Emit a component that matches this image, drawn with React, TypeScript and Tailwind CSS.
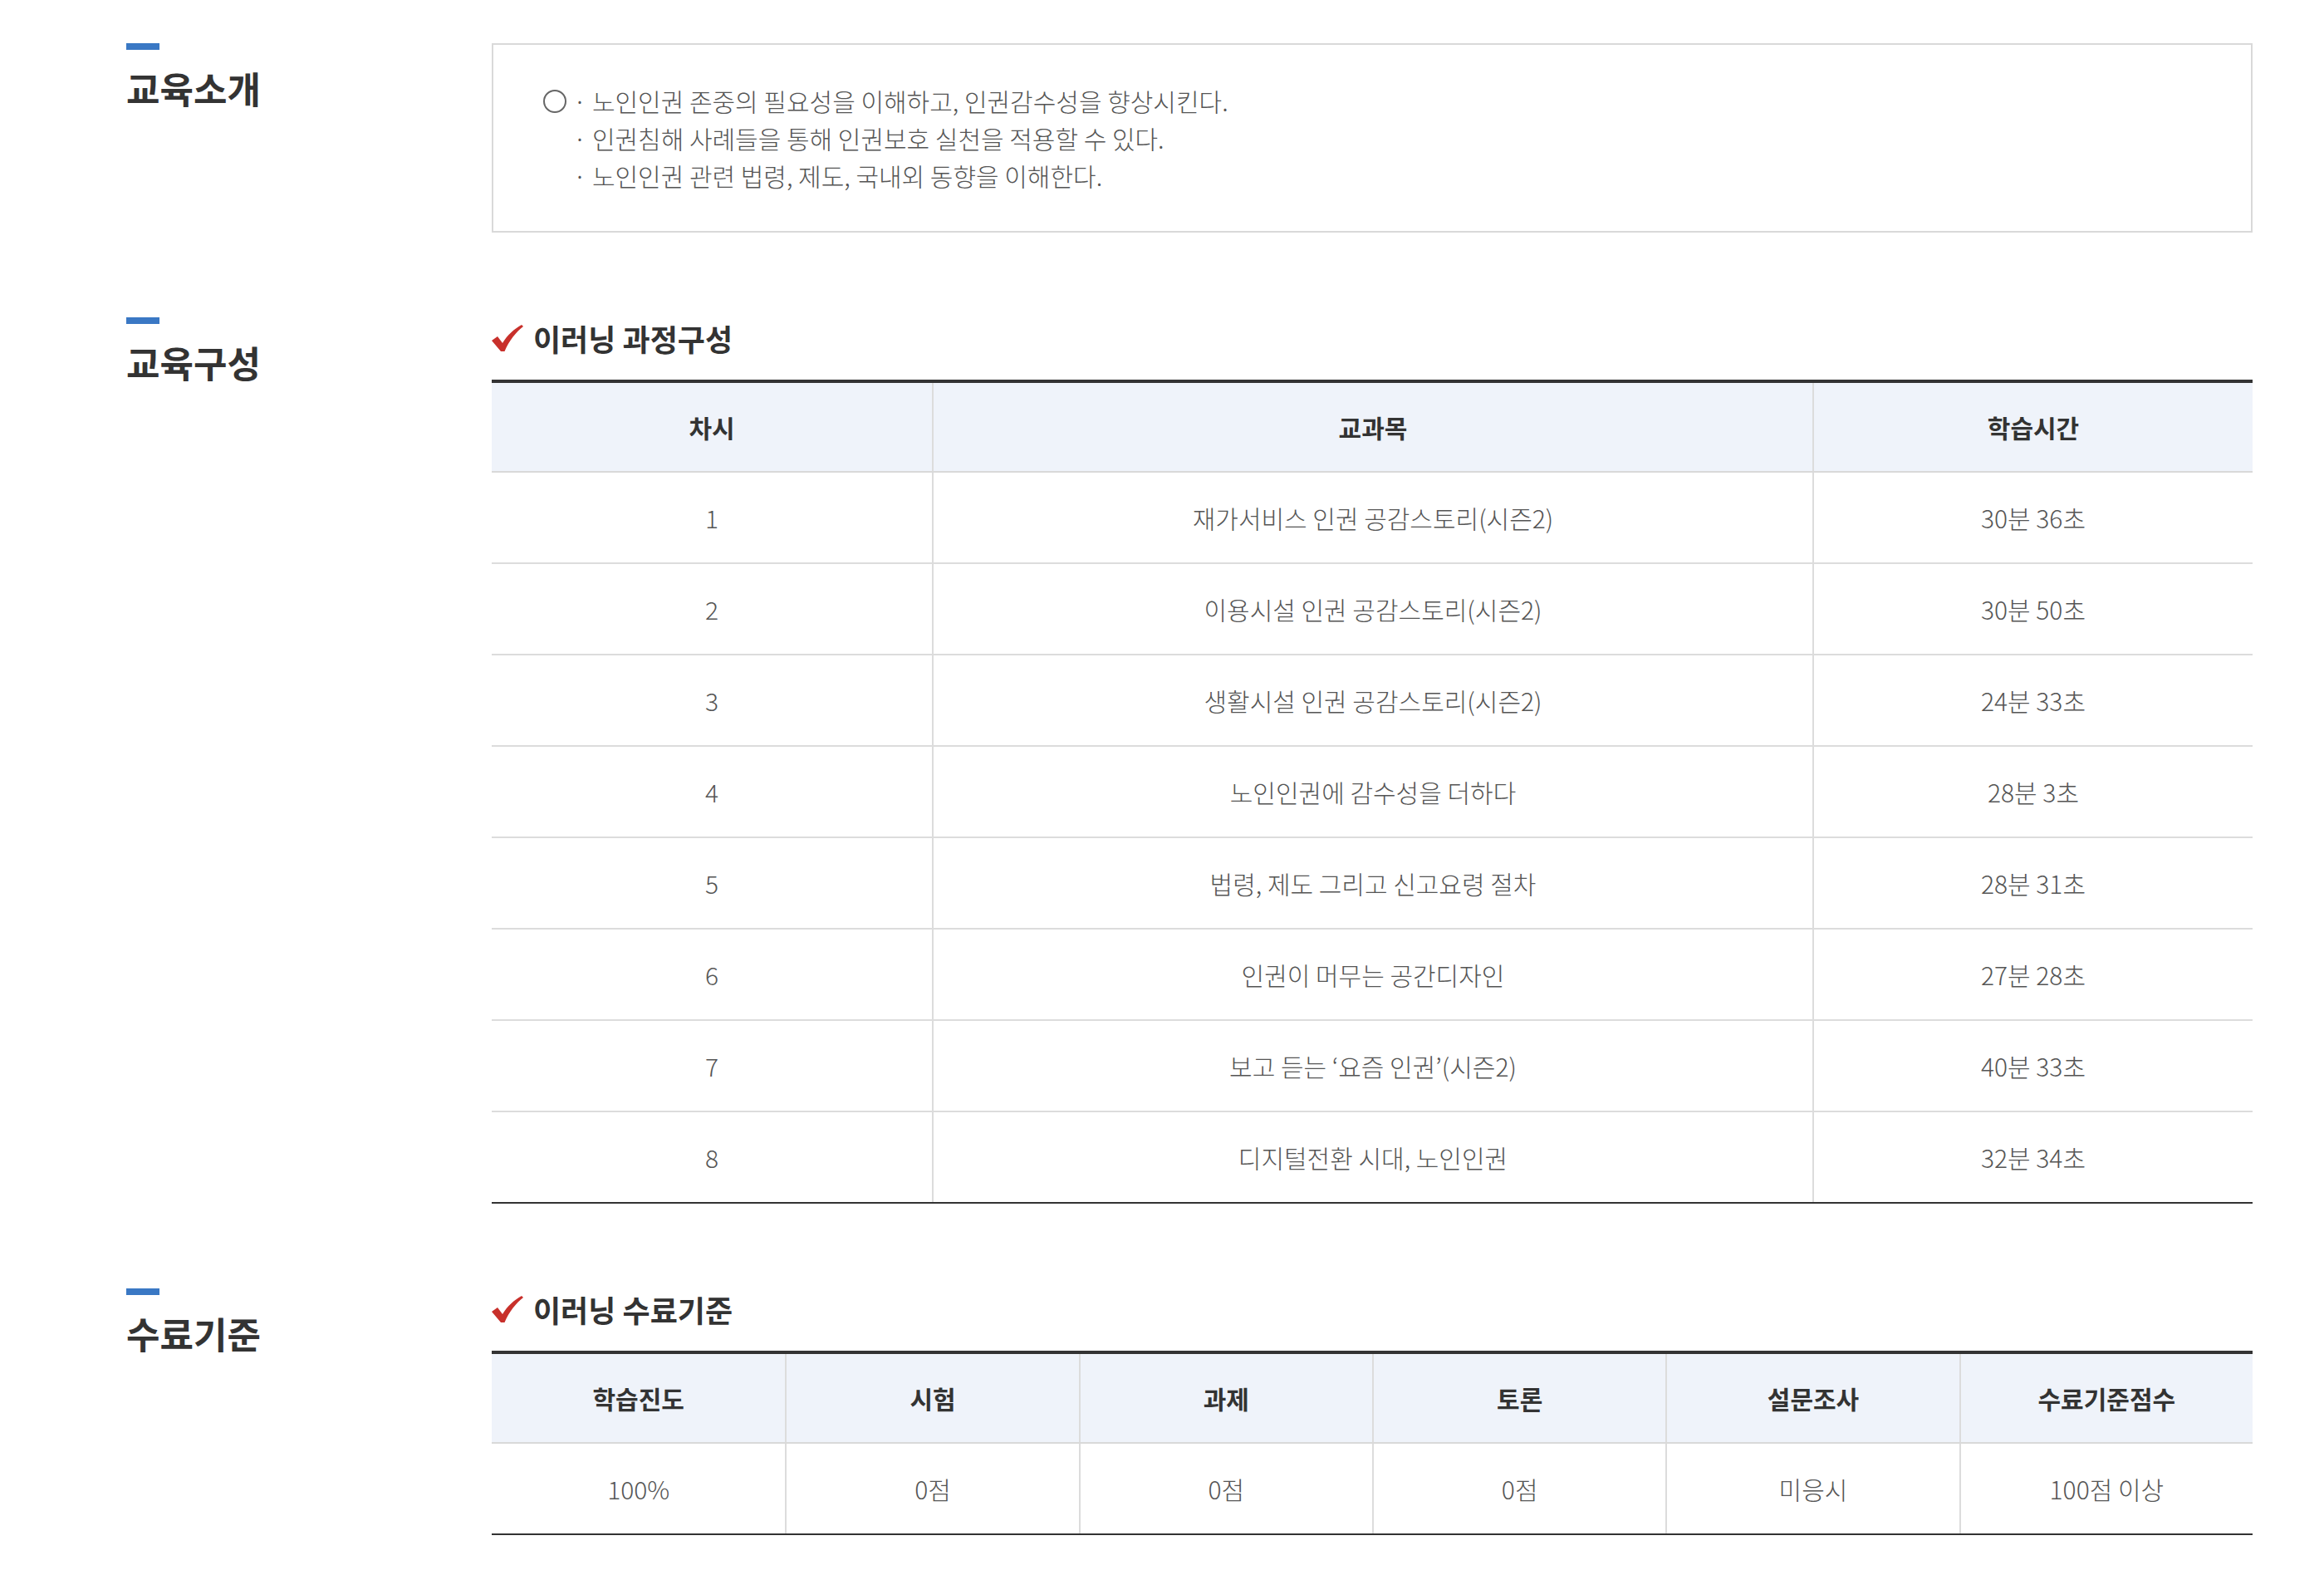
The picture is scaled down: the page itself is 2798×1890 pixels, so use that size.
const COURSES = [
  { no: 1, title: "재가서비스 인권 공감스토리(시즌2)", time: "30분 36초" },
  { no: 2, title: "이용시설 인권 공감스토리(시즌2)", time: "30분 50초" },
  { no: 3, title: "생활시설 인권 공감스토리(시즌2)", time: "24분 33초" },
  { no: 4, title: "노인인권에 감수성을 더하다", time: "28분 3초" },
  { no: 5, title: "법령, 제도 그리고 신고요령 절차", time: "28분 31초" },
  { no: 6, title: "인권이 머무는 공간디자인", time: "27분 28초" },
  { no: 7, title: "보고 듣는 ‘요즘 인권’(시즌2)", time: "40분 33초" },
  { no: 8, title: "디지털전환 시대, 노인인권", time: "32분 34초" },
];

const CRITERIA = [
  { label: "학습진도", value: "100%" },
  { label: "시험", value: "0점" },
  { label: "과제", value: "0점" },
  { label: "토론", value: "0점" },
  { label: "설문조사", value: "미응시" },
  { label: "수료기준점수", value: "100점 이상" },
];

const GOALS = [
  "노인인권 존중의 필요성을 이해하고, 인권감수성을 향상시킨다.",
  "인권침해 사례들을 통해 인권보호 실천을 적용할 수 있다.",
  "노인인권 관련 법령, 제도, 국내외 동향을 이해한다.",
];

function Check() {
  return (
    <svg width="38" height="32" viewBox="0 0 38 32" className="shrink-0">
      <path d="M0 19 L7 14 L13 22 C19 12 27 5 36 0 L38 2 C29 9 21 19 15.5 32 L11 32 Z" fill="#c8302b" />
    </svg>
  );
}

function Section({ title, children }: { title: string; children: React.ReactNode }) {
  return (
    <section className="flex">
      <div className="w-[440px] shrink-0">
        <div className="w-[40px] h-[8px] bg-[#3a78c4]" />
        <h2 className="mt-[17px] text-[44px] leading-[58px] font-bold text-[#333]">{title}</h2>
      </div>
      <div className="w-[2120px]">{children}</div>
    </section>
  );
}

function SubTitle({ children }: { children: React.ReactNode }) {
  return (
    <div className="flex items-center gap-[12px] h-[50px] mb-[25px]">
      <Check />
      <h3 className="text-[36px] font-bold text-[#333]">{children}</h3>
    </div>
  );
}

export default function App() {
  return (
    <div
      className="bg-white min-h-screen pl-[152px] pt-[52px] pb-[60px] flex flex-col gap-[102px]"
      style={{ fontFamily: '"Noto Sans CJK KR", "Noto Sans", sans-serif' }}
    >
      {/* 교육소개 */}
      <Section title="교육소개">
        <div className="border-2 border-[#d9d9d9] pl-[60px] py-[45px] flex">
          <span className="mt-[9px] w-[28px] h-[28px] rounded-full border-2 border-[#666] shrink-0 mr-[8px]" />
          <div className="text-[30px] leading-[44.8px] font-light text-[#555]">
            {GOALS.map((g) => (
              <p key={g}>· {g}</p>
            ))}
          </div>
        </div>
      </Section>

      {/* 교육구성 */}
      <Section title="교육구성">
        <SubTitle>이러닝 과정구성</SubTitle>
        <div className="border-t-4 border-b-2 border-[#333] text-[30px]">
          <div className="grid grid-cols-[1fr_2fr_1fr] bg-[#eff3fa] border-b-2 border-[#d9d9d9] font-bold text-[#333]">
            <div className="h-[106px] flex items-center justify-center">차시</div>
            <div className="h-[106px] flex items-center justify-center border-l-2 border-[#dcdcdc]">교과목</div>
            <div className="h-[106px] flex items-center justify-center border-l-2 border-[#dcdcdc]">학습시간</div>
          </div>
          {COURSES.map((c, i) => (
            <div
              key={c.no}
              className={
                "grid grid-cols-[1fr_2fr_1fr] font-light text-[#555] " +
                (i < COURSES.length - 1 ? "border-b-2 border-[#dcdcdc]" : "")
              }
            >
              <div className="h-[108px] flex items-center justify-center">{c.no}</div>
              <div className="h-[108px] flex items-center justify-center border-l-2 border-[#dcdcdc]">{c.title}</div>
              <div className="h-[108px] flex items-center justify-center border-l-2 border-[#dcdcdc]">{c.time}</div>
            </div>
          ))}
        </div>
      </Section>

      {/* 수료기준 */}
      <Section title="수료기준">
        <SubTitle>이러닝 수료기준</SubTitle>
        <div className="border-t-4 border-b-2 border-[#333] text-[30px]">
          <div className="grid grid-cols-6 bg-[#eff3fa] border-b-2 border-[#d9d9d9] font-bold text-[#333]">
            {CRITERIA.map((c, i) => (
              <div
                key={c.label}
                className={"h-[106px] flex items-center justify-center " + (i > 0 ? "border-l-2 border-[#dcdcdc]" : "")}
              >
                {c.label}
              </div>
            ))}
          </div>
          <div className="grid grid-cols-6 font-light text-[#555]">
            {CRITERIA.map((c, i) => (
              <div
                key={c.label}
                className={"h-[108px] flex items-center justify-center " + (i > 0 ? "border-l-2 border-[#dcdcdc]" : "")}
              >
                {c.value}
              </div>
            ))}
          </div>
        </div>
      </Section>
    </div>
  );
}
